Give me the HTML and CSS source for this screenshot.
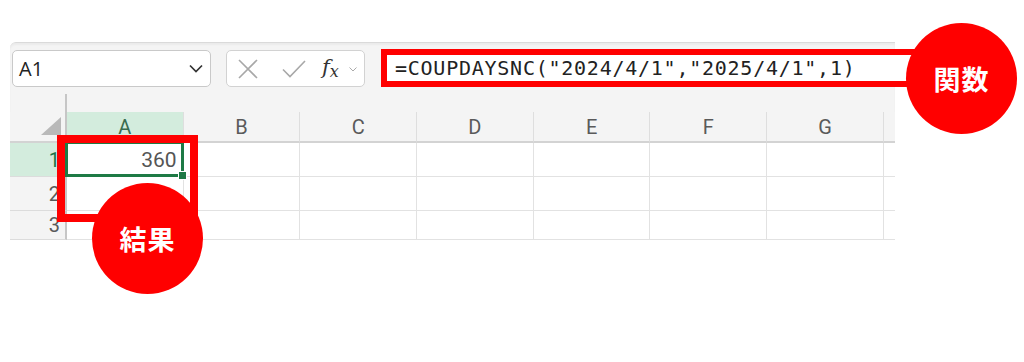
FILE: index.html
```html
<!DOCTYPE html>
<html lang="ja">
<head>
<meta charset="utf-8">
<title>COUPDAYSNC</title>
<link rel="stylesheet" href="styles.css">
</head>
<body>
<div class="sheet">
  <div class="toolbar">
    <div class="namebox">
      <span class="ref">A1</span>
      <svg class="chev" width="14" height="9" viewBox="0 0 14 9"><path d="M1 1.5 L7 7.5 L13 1.5" fill="none" stroke="#333" stroke-width="1.7"/></svg>
    </div>
    <div class="fxbtns">
      <svg class="ico-x" width="20" height="20" viewBox="0 0 20 20"><path d="M1 1 L19 19 M19 1 L1 19" stroke="#a8a8a8" stroke-width="1.6" fill="none"/></svg>
      <svg class="ico-ok" width="24" height="18" viewBox="0 0 24 18"><path d="M1 9.5 L8 16.5 L23 1" stroke="#a8a8a8" stroke-width="1.6" fill="none"/></svg>
      <span class="fx">f<span class="fx-x">x</span></span>
      <svg class="chev-s" width="8" height="5" viewBox="0 0 8 5"><path d="M0.5 0.5 L4 4 L7.5 0.5" fill="none" stroke="#aaa" stroke-width="1"/></svg>
    </div>
    <div class="formula">=COUPDAYSNC("2024/4/1","2025/4/1",1)</div>
  </div>
  <div class="split"><div class="split-line"></div></div>
  <div class="grid">
    <div class="corner"><svg width="20" height="18" viewBox="0 0 20 18"><polygon points="20,0 20,18 0,18" fill="#b9b9b9"/></svg></div>
    <div class="ch active">A</div>
    <div class="ch">B</div>
    <div class="ch">C</div>
    <div class="ch">D</div>
    <div class="ch">E</div>
    <div class="ch">F</div>
    <div class="ch">G</div>
    <div class="ch end"></div>

    <div class="rh active">1</div>
    <div class="cell sel">360</div>
    <div class="cell"></div><div class="cell"></div><div class="cell"></div><div class="cell"></div><div class="cell"></div><div class="cell"></div><div class="cell end"></div>

    <div class="rh">2</div>
    <div class="cell"></div><div class="cell"></div><div class="cell"></div><div class="cell"></div><div class="cell"></div><div class="cell"></div><div class="cell"></div><div class="cell end"></div>

    <div class="rh">3</div>
    <div class="cell"></div><div class="cell"></div><div class="cell"></div><div class="cell"></div><div class="cell"></div><div class="cell"></div><div class="cell"></div><div class="cell end"></div>
  </div>
</div>
<div class="mark-result"></div>
<div class="badge badge-func">関数</div>
<div class="badge badge-result">結果</div>
</body>
</html>
```

FILE: styles.css
```css
* { box-sizing: border-box; }
html, body { margin: 0; padding: 0; background: #fff; }
body {
  position: relative;
  width: 1024px;
  height: 362px;
  overflow: hidden;
  font-family: Roboto, "Liberation Sans", sans-serif;
}

.sheet {
  margin: 42px 0 0 10px;
  width: 885px;
  background: #f4f4f4;
  border-top: 1px solid #dadada;
  border-top-left-radius: 6px;
  box-shadow: inset 0 2px 2px rgba(0,0,0,0.04);
}

.toolbar {
  display: flex;
  align-items: flex-start;
  padding: 7px 0 0 2px;
  height: 44px;
}
.toolbar > * { flex: none; }

.namebox {
  width: 199px;
  height: 37px;
  background: #fff;
  border: 1px solid #c9c9c9;
  border-radius: 5px;
  display: flex;
  align-items: center;
  justify-content: space-between;
  padding: 0 7px 0 6px;
}
.ref {
  font-family: "Open Sans", "Liberation Sans", sans-serif;
  font-size: 20px;
  color: #222;
}

.fxbtns {
  margin-left: 15px;
  width: 139px;
  height: 37px;
  background: #fff;
  border: 1px solid #d2d2d2;
  border-radius: 5px;
  display: flex;
  align-items: center;
  padding-left: 11px;
}
.ico-x { margin-right: 24px; }
.ico-ok { margin-right: 16px; }
.fx {
  font-family: "DejaVu Serif", "Liberation Serif", serif;
  font-style: italic;
  font-size: 21px;
  color: #333;
  width: 22px;
  line-height: 1;
  margin-top: -3px;
}
.fx-x { font-size: 16px; position: relative; top: 3px; }
.chev-s { margin-left: 5px; margin-top: 2px; }

.formula {
  margin-left: 16px;
  margin-top: -1px;
  width: 540px;
  height: 38px;
  background: #fff;
  border: 6px solid #f00;
  padding-left: 8px;
  font-family: "DejaVu Sans Mono", "Liberation Mono", monospace;
  font-size: 20px;
  letter-spacing: 0.75px;
  line-height: 26px;
  color: #222;
  white-space: nowrap;
}

.split { height: 25px; padding-top: 7px; }
.split-line {
  margin-left: 55px;
  width: 2px;
  height: 18px;
  background: #c6c6c6;
}

.grid {
  display: grid;
  grid-template-columns: 57px repeat(7, 116.7px) 11px;
  grid-template-rows: 31px 34px 34px 29px;
}

.corner {
  background: #f4f4f4;
  border-right: 2px solid #c6c6c6;
  border-bottom: 2px solid #d3d3d3;
  display: flex;
  align-items: flex-end;
  justify-content: flex-end;
  padding: 0 4px 6px 0;
}

.ch {
  background: #f4f4f4;
  border-right: 1px solid #dedede;
  border-bottom: 2px solid #d3d3d3;
  display: flex;
  align-items: center;
  justify-content: center;
  font-size: 20px;
  color: #5a5a5a;
  padding-top: 1px;
}
.ch.active { background: #d3ecdd; color: #3a6b4f; }
.ch.end { border-right: none; }

.rh {
  background: #f4f4f4;
  border-right: 2px solid #c6c6c6;
  border-bottom: 1px solid #dcdcdc;
  display: flex;
  align-items: center;
  justify-content: flex-end;
  padding-right: 5px;
  font-size: 20px;
  color: #5a5a5a;
}
.rh.active { background: #d3ecdd; color: #217346; }

.cell {
  background: #fff;
  border-right: 1px solid #e2e2e2;
  border-bottom: 1px solid #e2e2e2;
}
.cell.end { border-right: none; }

.cell.sel {
  position: relative;
  display: flex;
  align-items: center;
  justify-content: flex-end;
  padding-right: 6px;
  font-size: 21px;
  color: #555;
}
.cell.sel::before {
  content: "";
  position: absolute;
  top: -2px; left: -2px; right: -1px; bottom: -1px;
  border: 3px solid #1e7a45;
}
.cell.sel::after {
  content: "";
  position: absolute;
  right: -4px; bottom: -4px;
  width: 7px; height: 7px;
  background: #1e7a45;
  border: 1px solid #fff;
}

.mark-result {
  position: absolute;
  left: 57px; top: 135px;
  width: 141px; height: 87px;
  border: 8px solid #f00;
}

.badge {
  position: absolute;
  width: 111px; height: 111px;
  border-radius: 50%;
  background: #f00;
  color: #fff;
  display: flex;
  align-items: center;
  justify-content: center;
  font-family: "Noto Sans CJK JP", "Noto Sans", sans-serif;
  font-weight: 700;
  font-size: 27px;
  letter-spacing: 1px;
}
.badge-func { left: 906px; top: 23px; }
.badge-result { left: 92px; top: 183px; }
```
